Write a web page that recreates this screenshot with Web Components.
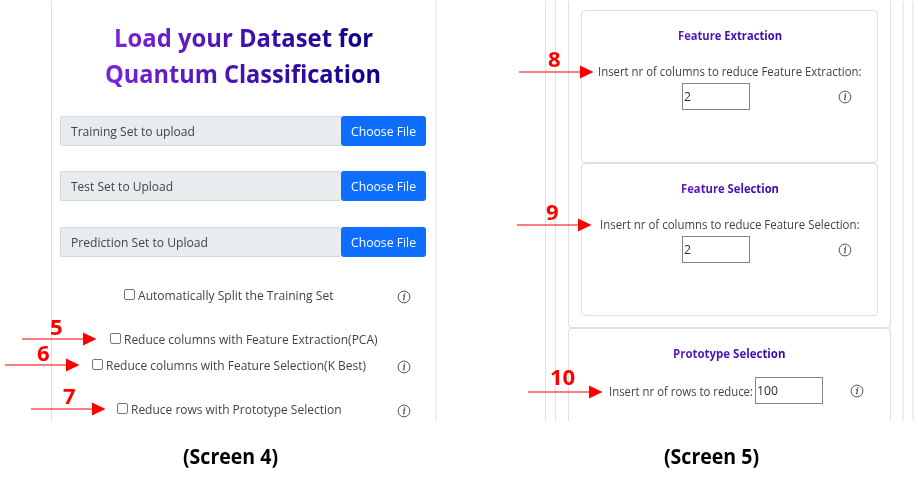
<!DOCTYPE html>
<html lang="en">
<head>
<meta charset="utf-8">
<title>Quantum Classification screens</title>
<style>
html,body{margin:0;background:#fff;width:918px;height:482px;overflow:hidden}
body{font-family:"Open Sans","Noto Sans",sans-serif;font-size:12.8px;color:#404347}
</style>
</head>
<body>
<screen-board></screen-board>
<script>
const define = (name, html, setup) => customElements.define(name, class extends HTMLElement {
  connectedCallback() {
    if (this.shadowRoot) return;
    const root = this.attachShadow({mode: 'open'});
    const t = document.createElement('template');
    t.innerHTML = html;
    root.append(t.content.cloneNode(true));
    if (setup) setup(this, root);
  }
});

/* One line of text squeezed or stretched to the given advance width. */
define('fit-text', `
<style>
:host{display:block;flex:none;height:var(--lh,18px);line-height:var(--lh,18px)}
span{display:inline-block;white-space:pre;transform-origin:0 0;background:var(--fill,none);-webkit-background-clip:var(--clip,border-box);background-clip:var(--clip,border-box);vertical-align:top}
</style><span></span>`, (el, root) => {
  const s = root.querySelector('span');
  s.textContent = el.getAttribute('text');
  const w = +el.getAttribute('w');
  el.style.width = w + 'px';
  s.style.transform = 'scaleX(' + w / s.getBoundingClientRect().width + ')';
});

define('info-icon', `
<style>:host{display:block;width:14px;height:14px;flex:none}svg{display:block}</style>
<svg width="14" height="14" viewBox="0 0 14 14"><circle cx="7" cy="7" r="5.9" fill="none" stroke="#555" stroke-width="1"/><path d="M6 5.9l1.5-.2-.9 4.3.9-.1" fill="none" stroke="#333" stroke-width="1"/><circle cx="7.6" cy="3.9" r=".75" fill="#333"/></svg>`);

define('file-row', `
<style>
:host{display:flex;height:30px;box-sizing:border-box}
.l{flex:1;box-sizing:border-box;background:#e9ecef;border:1px solid #d5dade;border-right:0;border-radius:2px 0 0 2px;padding:5px 0 0 9.5px}
.b{width:85px;box-sizing:border-box;background:#0d6efd;color:#fff;border-radius:3px;padding:6px 0 0 10px}
</style><div class="l"></div><div class="b"><fit-text text="Choose File" w="65"></fit-text></div>`, (el, root) => {
  root.querySelector('.l').innerHTML = `<fit-text text="${el.getAttribute('label')}" w="${el.getAttribute('w')}"></fit-text>`;
});

define('check-row', `
<style>
:host{display:flex;height:18px;align-items:flex-start}
i{width:11px;height:11px;box-sizing:border-box;border:1px solid #767676;border-radius:2px;margin:3px 3px 0 0;flex:none;background:#fff}
info-icon{margin:4px 24.5px 0 auto}
</style><i></i>`, (el, root) => {
  root.innerHTML += `<fit-text text="${el.getAttribute('label')}" w="${el.getAttribute('w')}"></fit-text>` + (el.hasAttribute('info') ? '<info-icon></info-icon>' : '');
});

define('card-title', `
<style>:host{display:flex;justify-content:center;font-weight:700;font-size:12px;--fill:linear-gradient(90deg,#5c1bc6,#3507a7);--clip:text}fit-text{color:transparent}</style>`, (el, root) => {
  root.innerHTML += `<fit-text text="${el.getAttribute('text')}" w="${el.getAttribute('w')}"></fit-text>`;
});

define('num-field', `
<style>:host{display:block;box-sizing:border-box;width:68px;height:27px;border:1px solid #858585;padding:3px 0 0 .5px;flex:none;color:#303030;background:#fff}</style>`, (el, root) => {
  root.innerHTML += `<fit-text text="${el.getAttribute('value')}" w="${el.getAttribute('w')}"></fit-text>`;
});

define('reduce-card', `
<style>
:host{display:block;box-sizing:border-box;height:153px;border:1px solid #dedede;border-radius:4px;padding-top:16px}
.q{display:flex;justify-content:center;margin-top:17px;padding-left:1px}
.f{display:grid;grid-template-columns:100px 68px 1fr;margin-top:3px}
num-field{grid-column:2}info-icon{margin:7px 25.5px 0 auto}
</style><slot></slot><div class="q"></div><div class="f"><num-field value="2" w="7"></num-field><info-icon></info-icon></div>`, (el, root) => {
  root.querySelector('.q').innerHTML = `<fit-text text="${el.getAttribute('label')}" w="${el.getAttribute('w')}"></fit-text>`;
});

define('upload-screen', `
<style>
:host{display:block;box-sizing:border-box;width:386px;height:420px;border:solid #dedede;border-width:0 2px 0 1px;border-right-color:#efefef;padding:18px 9px 0 8px}
h1{margin:0 0 25px;font-size:25px;font-weight:700;color:transparent;display:flex;flex-direction:column;align-items:center;--lh:36px;--fill:linear-gradient(90deg,#7d24da,#0c0089);--clip:text}
file-row{margin-bottom:25px}file-row+file-row{margin-bottom:26px}
.c{display:flex;flex-direction:column}
</style>
<h1><fit-text text="Load your Dataset for" w="259"></fit-text><fit-text text="Quantum Classification" w="276"></fit-text></h1>
<file-row label="Training Set to upload" w="124"></file-row>
<file-row label="Test Set to Upload" w="102"></file-row>
<file-row label="Prediction Set to Upload" w="137"></file-row>
<div class="c">
<check-row style="margin:3px -9px 0 64px" label="Automatically Split the Training Set" w="195.5" info></check-row>
<check-row style="margin:26px -9px 0 50px" label="Reduce columns with Feature Extraction(PCA)" w="253.5"></check-row>
<check-row style="margin:8px -9px 0 32px" label="Reduce columns with Feature Selection(K Best)" w="260" info></check-row>
<check-row style="margin:26px -9px 0 56.5px" label="Reduce rows with Prototype Selection" w="210.5" info></check-row>
</div>`);

define('reduce-screen', `
<style>
:host{display:block;box-sizing:border-box;width:369px;height:420px;border:solid #e2e2e2;border-width:0 2px 0 1px;border-right-color:#eee;padding:0 8px 0 9px}
.m{box-sizing:border-box;height:420px;border:solid #e2e2e2;border-width:0 2px 0 1px;border-right-color:#eee;padding:0 11px 0 12px}
.a,.b{box-sizing:border-box;border:1px solid #dedede}
.a{height:327px;border-top:0;border-radius:0 0 4px 4px;padding:9px 12px 0}
.b{height:93px;border-bottom:0;border-radius:4px 4px 0 0;padding-top:16px}
.r{display:flex;padding-left:40px;margin-top:14px}
.r>fit-text{margin:5px 2px 0 0}.r info-icon{margin:7px 0 0 26.5px}
</style>
<div class="m"><div class="a">
<reduce-card label="Insert nr of columns to reduce Feature Extraction:" w="263.5"><card-title text="Feature Extraction" w="104"></card-title></reduce-card>
<reduce-card label="Insert nr of columns to reduce Feature Selection:" w="259.5"><card-title text="Feature Selection" w="98"></card-title></reduce-card>
</div><div class="b"><card-title text="Prototype Selection" w="112.5"></card-title>
<div class="r"><fit-text text="Insert nr of rows to reduce:" w="144"></fit-text><num-field value="100" w="21"></num-field><info-icon></info-icon></div>
</div></div>`);

/* Numbered red arrow laid over a screen; x,y is the line's left end. */
define('step-arrow', `
<style>
:host{position:absolute;display:block;width:75px;height:40px;color:#f00;font:700 22px/26px "Open Sans",sans-serif;--lh:26px}
svg{position:absolute;left:0;top:26px}fit-text{position:absolute;top:0}
</style><svg width="75" height="14" viewBox="0 0 75 14"><path d="M0 7H63" stroke="red" stroke-width="1.2"/><path d="M61 .5L74.5 7 61 13.5Z" fill="red"/></svg>`, (el, root) => {
  const [x, y, dx, dy] = el.getAttribute('at').split(',').map(Number), n = el.getAttribute('n');
  el.style.left = x + 'px'; el.style.top = (y - 33) + 'px';
  root.innerHTML += `<fit-text style="left:${dx}px;top:${dy}px" text="${n}" w="${n.length * 12.6}"></fit-text>`;
});

define('screen-board', `
<style>
:host{display:grid;grid-template-columns:386px 369px;column-gap:108px;position:relative;width:918px;height:482px;box-sizing:border-box;padding:1px 0 0 51px;grid-template-rows:420px 1fr}
.cap{color:#000;font:700 20.5px/28px "Open Sans",sans-serif;--lh:28px;padding:21px 0 0 132px}
.cap+.cap{padding-left:119px}
</style>
<upload-screen></upload-screen><reduce-screen></reduce-screen>
<div class="cap"><fit-text text="(Screen 4)" w="95"></fit-text></div>
<div class="cap"><fit-text text="(Screen 5)" w="95"></fit-text></div>
<step-arrow n="5" at="22,338.5,28,7"></step-arrow>
<step-arrow n="6" at="5,364.5,32,7"></step-arrow>
<step-arrow n="7" at="31,408.5,32,6"></step-arrow>
<step-arrow n="8" at="519,71.5,29,6"></step-arrow>
<step-arrow n="9" at="517,224.5,29,6"></step-arrow>
<step-arrow n="10" at="528,391.5,22,4"></step-arrow>`);
</script>
</body>
</html>
